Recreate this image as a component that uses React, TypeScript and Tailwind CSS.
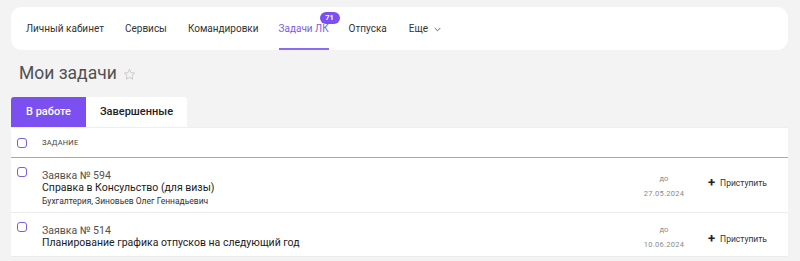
import React from "react";

const Checkbox = () => (
  <div className="w-[10px] h-[10px] rounded-[3px] border-[1.5px] border-[#7c5ce0] bg-white shrink-0" />
);

const Row = ({
  num,
  title,
  sub,
  date,
  h,
}: {
  num: string;
  title: string;
  sub?: string;
  date: string;
  h: string;
}) => (
  <div className={`flex border-b border-[#ececec] ${h}`}>
    <div className="w-[31px] pl-[6px] pt-[9px] shrink-0">
      <Checkbox />
    </div>
    <div className="flex-1 pt-[12px]">
      <div className="text-[10.5px] text-[#505050] leading-[12px]">{num}</div>
      <div className="text-[10.5px] text-[#1a1a1a] leading-[11px]">{title}</div>
      {sub && <div className="text-[8.5px] text-[#333] mt-[3px] leading-[10px]">{sub}</div>}
    </div>
    <div className={`w-[44px] flex flex-col items-center ${sub ? "pt-[16px]" : "pt-[12px]"} shrink-0 mr-[1px]`}>
      <div className="text-[7.5px] text-[#8a8a8a] leading-[9px]">до</div>
      <div className="text-[7.5px] text-[#8a8a8a] leading-[9px] mt-[6px] tracking-[0.3px]">{date}</div>
    </div>
    <div className={`w-[101px] pl-[21px] flex ${sub ? "pt-[20px]" : "pt-[21px]"} shrink-0`}>
      <div className="flex items-center gap-[5px] h-[10px]">
        <span className="text-[13px] leading-none font-bold text-[#222] -mt-[1px]">+</span>
        <span className="text-[8.5px] text-[#333]">Приступить</span>
      </div>
    </div>
  </div>
);

export default function App() {
  return (
    <div
      className="w-[800px] h-[261px] overflow-hidden bg-[#f3f3f3] pl-[11px] pr-[12px] pt-[7px]"
      style={{ fontFamily: "Roboto, 'Noto Sans', sans-serif" }}
    >
      <nav className="h-[43px] bg-white rounded-[11px] flex items-stretch pl-[15px] text-[10px] text-[#333]">
        <div className="flex items-center mr-[21px]">Личный кабинет</div>
        <div className="flex items-center mr-[21px]">Сервисы</div>
        <div className="flex items-center mr-[20px]">Командировки</div>
        <div className="relative flex items-center mr-[20px] text-[#7c5ce0] border-b-2 border-[#8b6cf0] pt-[2px]">
          Задачи ЛК
          <span className="absolute left-[41px] top-[5px] h-[12px] min-w-[20px] px-[4px] rounded-full bg-[#7b4ff0] text-white text-[7.5px] font-bold flex items-center justify-center">
            71
          </span>
        </div>
        <div className="flex items-center mr-[22px]">Отпуска</div>
        <div className="flex items-center gap-[6px]">
          Еще
          <svg width="7" height="5" viewBox="0 0 7 5" className="mt-[1px]">
            <path d="M0.7 1 L3.5 3.8 L6.3 1" fill="none" stroke="#666" strokeWidth="1" />
          </svg>
        </div>
      </nav>

      <div className="flex items-center h-[44px] pl-[8px] pt-[3px] gap-[6px]">
        <h1 className="text-[17.5px] text-[#505050] font-normal">Мои задачи</h1>
        <svg width="13" height="13" viewBox="0 0 24 24" className="mt-[1px]">
          <path
            d="M12 2.5l2.9 6.1 6.6.8-4.9 4.6 1.3 6.6L12 17.3l-5.9 3.3 1.3-6.6-4.9-4.6 6.6-.8z"
            fill="none"
            stroke="#c4c4c4"
            strokeWidth="1.6"
            strokeLinejoin="round"
          />
        </svg>
      </div>

      <div className="flex mt-[3px] h-[30px]">
        <div className="w-[75px] bg-[#7b4ff0] text-white text-[11px] font-medium flex items-center justify-center rounded-tl-[3px]">
          В работе
        </div>
        <div className="w-[101px] bg-white text-[#222] text-[11px] font-medium flex items-center justify-center rounded-tr-[3px]">
          Завершенные
        </div>
      </div>

      <div className="bg-white border-t border-[#eceef2]">
        <div className="h-[30px] flex items-center border-b border-[#a9a9a9]">
          <div className="w-[31px] pl-[6px] shrink-0">
            <Checkbox />
          </div>
          <div className="text-[7.5px] text-[#444] tracking-[0.2px]">ЗАДАНИЕ</div>
        </div>
        <Row
          num="Заявка № 594"
          title="Справка в Консульство (для визы)"
          sub="Бухгалтерия, Зиновьев Олег Геннадьевич"
          date="27.05.2024"
          h="h-[55px]"
        />
        <Row
          num="Заявка № 514"
          title="Планирование графика отпусков на следующий год"
          date="10.06.2024"
          h="h-[44px]"
        />
      </div>
    </div>
  );
}
